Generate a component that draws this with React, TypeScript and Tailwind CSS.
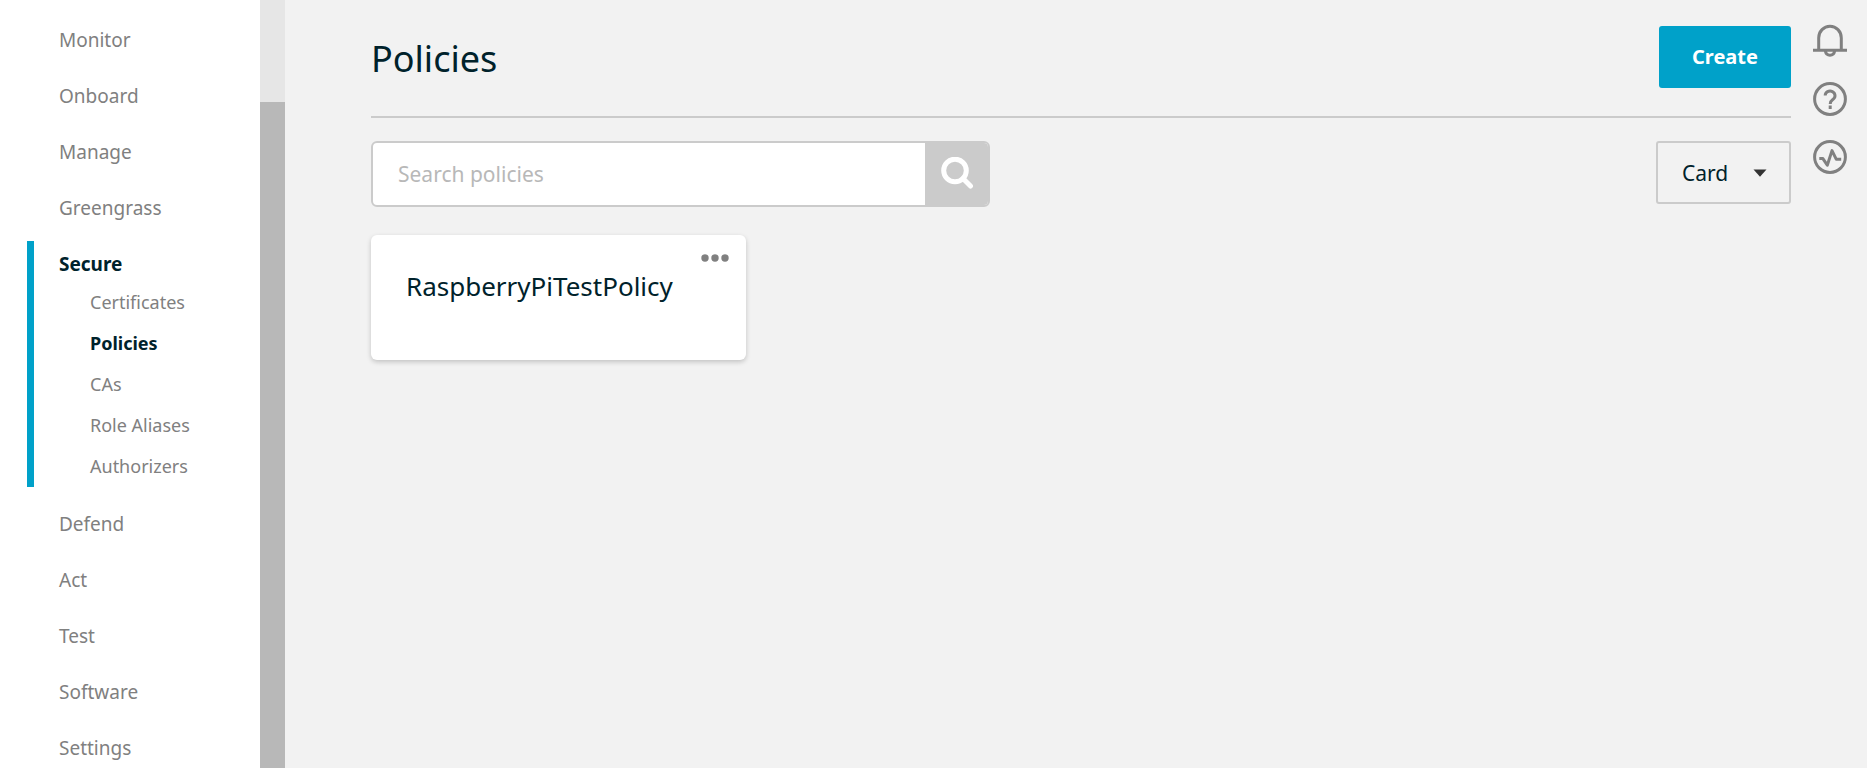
import type { ReactNode } from "react";

function NavLink({ label }: { label: string }) {
  return (
    <a href="#" className="flex h-14 items-center pl-[59px] text-[19px] text-[#808080]">
      {label}
    </a>
  );
}

function SubLink({ label, active = false }: { label: string; active?: boolean }) {
  return (
    <a
      href="#"
      aria-current={active ? "page" : undefined}
      className={
        active
          ? "flex h-[41px] items-center pl-14 text-[18px] font-bold text-[#00222b]"
          : "flex h-[41px] items-center pl-14 text-[18px] text-[#808080]"
      }
    >
      {label}
    </a>
  );
}

function Sidebar() {
  return (
    <aside className="flex h-screen w-[285px] shrink-0 overflow-hidden bg-white">
      <nav aria-label="Main" className="flex-1 pt-3">
        <NavLink label="Monitor" />
        <NavLink label="Onboard" />
        <NavLink label="Manage" />
        <NavLink label="Greengrass" />
        <div className="mt-[5px] mb-[9px] ml-[27px] border-l-[7px] border-[#00a1c9] pt-[5px]">
          <a href="#" className="flex h-9 items-center pl-[25px] text-[19px] font-bold text-[#00222b]">
            Secure
          </a>
          <SubLink label="Certificates" />
          <SubLink label="Policies" active />
          <SubLink label="CAs" />
          <SubLink label="Role Aliases" />
          <SubLink label="Authorizers" />
        </div>
        <NavLink label="Defend" />
        <NavLink label="Act" />
        <NavLink label="Test" />
        <NavLink label="Software" />
        <NavLink label="Settings" />
      </nav>
      <div className="w-[25px] bg-[#e6e6e6] pt-[102px]">
        <div className="h-full bg-[#b8b8b8]" />
      </div>
    </aside>
  );
}

function IconButton({ label, children }: { label: string; children: ReactNode }) {
  return (
    <button type="button" aria-label={label} className="text-[#808080]">
      <svg width="34" height="34" viewBox="0 0 34 34" fill="none" stroke="currentColor" strokeWidth="3">
        {children}
      </svg>
    </button>
  );
}

export default function App() {
  return (
    <div className="flex min-h-screen bg-[#f2f2f2] font-['Noto_Sans','Open_Sans',sans-serif] text-[#00222b]">
      <Sidebar />
      <main className="min-w-0 flex-1 pl-[86px]">
        <header className="flex h-[118px] items-start justify-between border-b-2 border-[#cbcbcb] pt-[26px]">
          <h1 className="text-[36px] leading-[66px]">Policies</h1>
          <button type="button" className="h-[62px] w-[132px] rounded-[3px] bg-[#00a1c9] text-[20px] font-bold text-white">
            Create
          </button>
        </header>
        <div className="flex items-start justify-between pt-[23px]">
          <form role="search" className="flex h-[66px] w-[619px] overflow-hidden rounded-md border-2 border-[#cbcbcb] bg-white">
            <input
              type="text"
              aria-label="Search policies"
              placeholder="Search policies"
              className="min-w-0 flex-1 pt-0.5 pl-[25px] text-[21px] outline-none placeholder:text-[#b8b8b8]"
            />
            <button type="button" aria-label="Search" className="flex w-[63px] items-center justify-center bg-[#cbcbcb] text-white">
              <svg width="34" height="34" viewBox="0 0 34 34" fill="none" stroke="currentColor" strokeWidth="5">
                <circle cx="15" cy="13.5" r="11.3" />
                <path d="M23 21.5l7.5 7.5" strokeLinecap="round" />
              </svg>
            </button>
          </form>
          <div className="relative">
            <select
              aria-label="View"
              defaultValue="Card"
              className="h-[63px] w-[135px] appearance-none rounded-[3px] border-2 border-[#cbcbcb] bg-transparent pt-0.5 pl-6 text-[21px]"
            >
              <option>Card</option>
              <option>List</option>
            </select>
            <svg className="pointer-events-none absolute top-7 right-6" width="14" height="8" viewBox="0 0 14 8" fill="#333">
              <path d="M0.5 0.5h13L7 7.7z" />
            </svg>
          </div>
        </div>
        <article className="mt-7 flex h-[125px] w-[375px] justify-between rounded-md bg-white pr-4 pl-[35px] shadow-[0_2px_5px_rgba(0,0,0,0.2)]">
          <h2 className="pt-[31px] text-[26px] leading-10">
            <a href="#">RaspberryPiTestPolicy</a>
          </h2>
          <button type="button" aria-label="More actions" className="h-[46px]">
            <svg width="30" height="8" viewBox="0 0 30 8" fill="#808080">
              <circle cx="5" cy="4" r="3.7" />
              <circle cx="15" cy="4" r="3.7" />
              <circle cx="25" cy="4" r="3.7" />
            </svg>
          </button>
        </article>
      </main>
      <div className="flex w-[76px] shrink-0 flex-col items-start gap-6 pt-6 pl-[22px]">
        <IconButton label="Notifications">
          <path d="M5.7 25V14a11.3 11.8 0 0 1 22.6 0v11M0 26.2h34M12.3 27a4.8 5.2 0 0 0 9.4 0" />
        </IconButton>
        <IconButton label="Help">
          <circle cx="17" cy="17" r="15.4" />
          <path d="M12.2 13.6a4.9 4.6 0 1 1 7.7 3.8c-1.8 1.3-2.7 1.9-2.7 4.5M17.2 23.6v3.4" />
        </IconButton>
        <IconButton label="Service health">
          <circle cx="17" cy="17" r="15.4" />
          <path d="M6.3 18.6h3.6l4.4 6.6 4.7-14.6 4.2 8.6h5" strokeLinejoin="round" />
        </IconButton>
      </div>
    </div>
  );
}
